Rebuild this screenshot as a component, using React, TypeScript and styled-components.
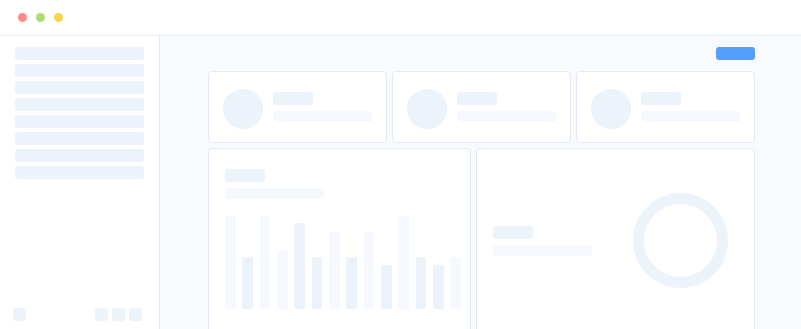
import styled, { createGlobalStyle } from 'styled-components';

const GlobalStyle = createGlobalStyle`
  html, body {
    margin: 0;
    padding: 0;
    background: #ffffff;
    font-family: 'Liberation Sans', Arial, sans-serif;
  }
  * { box-sizing: border-box; }
`;

const Window = styled.div`
  width: 801px;
  height: 329px;
  display: flex;
  flex-direction: column;
  overflow: hidden;
  background: #ffffff;
`;

const TitleBar = styled.div`
  height: 36px;
  flex-shrink: 0;
  display: flex;
  align-items: center;
  gap: 9px;
  padding: 0 0 0 18px;
  border-bottom: 1px solid #e4ebf4;
`;

const Dot = styled.span<{ $color: string }>`
  width: 9px;
  height: 9px;
  border-radius: 50%;
  background: ${({ $color }) => $color};
`;

const Body = styled.div`
  flex: 1;
  display: flex;
  min-height: 0;
`;

const Sidebar = styled.aside`
  width: 160px;
  flex-shrink: 0;
  display: flex;
  flex-direction: column;
  justify-content: space-between;
  padding: 11px 15px 8px 15px;
  border-right: 1px solid #e1e9f4;
  background: #ffffff;
`;

const NavList = styled.div`
  display: flex;
  flex-direction: column;
  gap: 4px;
`;

const NavItem = styled.div`
  height: 13px;
  width: 129px;
  border-radius: 3px;
  background: #edf3fa;
`;

const SidebarFooter = styled.div`
  display: flex;
  justify-content: space-between;
  margin: 0 2px 0 -2px;
`;

const FooterGroup = styled.div`
  display: flex;
  gap: 4px;
`;

const Square = styled.div`
  width: 13px;
  height: 13px;
  border-radius: 3px;
  background: #edf3fa;
`;

const Main = styled.main`
  flex: 1;
  background: #f8fafd;
  padding: 11px 48px 0 48px;
  display: flex;
  flex-direction: column;
  gap: 11px;
`;

const Toolbar = styled.div`
  display: flex;
  justify-content: flex-end;
`;

const PrimaryButton = styled.div`
  width: 39px;
  height: 13px;
  border-radius: 3px;
  background: #559ffc;
`;

const Content = styled.div`
  display: flex;
  flex-direction: column;
  gap: 5px;
`;

const StatRow = styled.div`
  display: grid;
  grid-template-columns: repeat(3, 1fr);
  gap: 5px;
`;

const Card = styled.div`
  background: #ffffff;
  border: 1px solid #e3eaf4;
  border-radius: 4px;
`;

const StatCard = styled(Card)`
  height: 72px;
  display: flex;
  align-items: center;
  gap: 10px;
  padding: 0 14px;
`;

const Avatar = styled.div`
  width: 40px;
  height: 40px;
  margin-top: 4px;
  border-radius: 50%;
  background: #edf3fa;
  flex-shrink: 0;
`;

const TextStack = styled.div`
  display: flex;
  flex-direction: column;
  gap: 6px;
`;

const Line = styled.div<{ $w: number; $h: number; $light?: boolean }>`
  width: ${({ $w }) => $w}px;
  height: ${({ $h }) => $h}px;
  border-radius: 3px;
  background: ${({ $light }) => ($light ? '#f5f8fd' : '#edf3fa')};
`;

const ChartRow = styled.div`
  display: grid;
  grid-template-columns: 263px 1fr;
  gap: 5px;
`;

const BarCard = styled(Card)`
  height: 190px;
  padding: 20px 16px 0 16px;
  display: flex;
  flex-direction: column;
  gap: 6px;
`;

const Bars = styled.div`
  margin-top: 11px;
  width: 236px;
  height: 93px;
  display: flex;
  align-items: flex-end;
  gap: 6.6px;
`;

const Bar = styled.div<{ $dark: boolean }>`
  flex: 1;
  border-radius: 2px;
  background: ${({ $dark }) => ($dark ? '#ebf2fa' : '#f5f9fe')};
`;

const DonutCard = styled(Card)`
  height: 186px;
  display: flex;
  align-items: center;
  justify-content: space-between;
  padding: 0 26px 0 16px;
`;

const Donut = styled.div`
  width: 95px;
  height: 95px;
  border-radius: 50%;
  border: 11px solid #edf3fa;
  margin-top: -1px;
`;

const bars: { h: number; dark: boolean }[] = [
  { h: 93, dark: false },
  { h: 52, dark: true },
  { h: 93, dark: false },
  { h: 58, dark: false },
  { h: 86, dark: true },
  { h: 52, dark: true },
  { h: 77, dark: false },
  { h: 52, dark: true },
  { h: 77, dark: false },
  { h: 44, dark: true },
  { h: 93, dark: false },
  { h: 52, dark: true },
  { h: 44, dark: true },
  { h: 52, dark: false },
];

export default function App() {
  return (
    <>
      <GlobalStyle />
      <Window>
        <TitleBar>
          <Dot $color="#fe8a8a" />
          <Dot $color="#acdc70" />
          <Dot $color="#f7d54a" />
        </TitleBar>
        <Body>
          <Sidebar>
            <NavList>
              {Array.from({ length: 8 }).map((_, i) => (
                <NavItem key={i} />
              ))}
            </NavList>
            <SidebarFooter>
              <Square />
              <FooterGroup>
                <Square />
                <Square />
                <Square />
              </FooterGroup>
            </SidebarFooter>
          </Sidebar>
          <Main>
            <Toolbar>
              <PrimaryButton />
            </Toolbar>
            <Content>
              <StatRow>
                {[0, 1, 2].map((i) => (
                  <StatCard key={i}>
                    <Avatar />
                    <TextStack>
                      <Line $w={40} $h={13} />
                      <Line $w={99} $h={11} $light />
                    </TextStack>
                  </StatCard>
                ))}
              </StatRow>
              <ChartRow>
                <BarCard>
                  <Line $w={40} $h={13} />
                  <Line $w={99} $h={11} $light />
                  <Bars>
                    {bars.map((b, i) => (
                      <Bar key={i} $dark={b.dark} style={{ height: b.h }} />
                    ))}
                  </Bars>
                </BarCard>
                <DonutCard>
                  <TextStack>
                    <Line $w={40} $h={13} />
                    <Line $w={99} $h={11} $light />
                  </TextStack>
                  <Donut />
                </DonutCard>
              </ChartRow>
            </Content>
          </Main>
        </Body>
      </Window>
    </>
  );
}
